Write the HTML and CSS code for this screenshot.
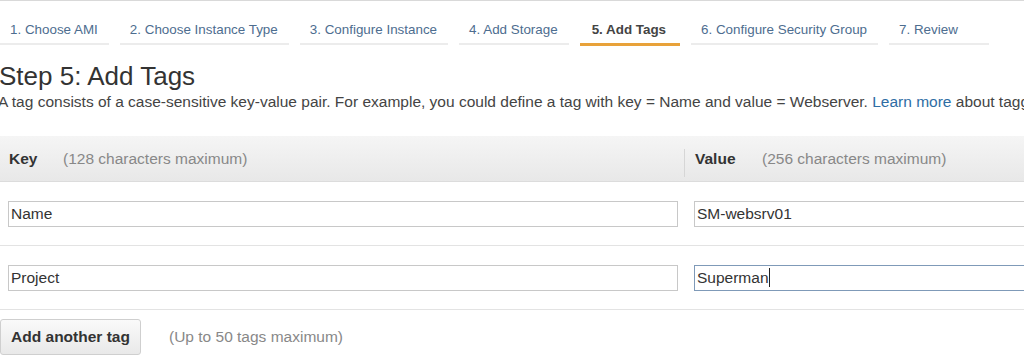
FILE: index.html
```html
<!DOCTYPE html>
<html>
<head>
<meta charset="utf-8">
<link rel="stylesheet" href="styles.css">
</head>
<body>
<nav class="tabs">
  <div class="tab">1. Choose AMI</div>
  <div class="tab">2. Choose Instance Type</div>
  <div class="tab">3. Configure Instance</div>
  <div class="tab">4. Add Storage</div>
  <div class="tab active">5. Add Tags</div>
  <div class="tab">6. Configure Security Group</div>
  <div class="tab last">7. Review</div>
</nav>
<main class="page">
  <h1 class="title">Step 5: Add Tags</h1>
  <p class="desc">A tag consists of a case-sensitive key-value pair. For example, you could define a tag with key = Name and value = Webserver. <a class="link">Learn more</a> about tagging</p>
  <div class="table">
    <div class="thead">
      <div class="th key-col"><b class="lbl-key">Key</b><span class="hint">(128 characters maximum)</span></div>
      <div class="th val-col"><b class="lbl-val">Value</b><span class="hint">(256 characters maximum)</span></div>
    </div>
    <div class="row">
      <div class="cell key-col"><div class="field">Name</div></div>
      <div class="cell val-col"><div class="field">SM-websrv01</div></div>
    </div>
    <div class="row">
      <div class="cell key-col"><div class="field">Project</div></div>
      <div class="cell val-col"><div class="field focus">Superman<span class="caret"></span></div></div>
    </div>
  </div>
  <div class="actions">
    <button class="btn">Add another tag</button>
    <span class="note">(Up to 50 tags maximum)</span>
  </div>
</main>
</body>
</html>
```
FILE: styles.css
```css
html, body {
  margin: 0;
  padding: 0;
  background: #fff;
  font-family: "Liberation Sans", Arial, sans-serif;
  color: #333;
  overflow: hidden;
}
.tabs {
  display: flex;
  gap: 11px;
  border-top: 1px solid #d9d9d9;
  height: 45px;
  white-space: nowrap;
}
.tab {
  padding: 16px 11px 0 10px;
  font-size: 13.4px;
  color: #4d6d8f;
  line-height: 26px;
  height: 26px;
  border-bottom: 2px solid #ececec;
}
.tab.last {
  padding-right: 31px;
}
.tab.active {
  color: #444;
  font-weight: bold;
  padding: 16px 14px 0 12px;
  border-bottom: 3px solid #e8a23a;
  height: 26px;
  margin-bottom: -1px;
}
.page {
  margin-left: -2px;
  white-space: nowrap;
}
.title {
  margin: 15px 0 0 1px;
  font-size: 26px;
  font-weight: normal;
  color: #333;
  line-height: 30px;
}
.desc {
  margin: 2px 0 0 0;
  font-size: 15.5px;
  color: #444;
  line-height: 18px;
}
.link {
  color: #2e6da4;
}
.table {
  margin-top: 25px;
  width: 1040px;
}
.thead {
  display: flex;
  height: 45px;
  background: linear-gradient(#f5f5f5, #e8e8e8);
  border-bottom: 1px solid #dcdcdc;
}
.th {
  display: flex;
  align-items: center;
  font-size: 15.5px;
  color: #333;
}
.lbl-key {
  width: 54px;
}
.lbl-val {
  width: 67px;
}
.hint {
  color: #888;
}
.key-col {
  width: 675px;
  padding-left: 11px;
}
.val-col {
  flex: 1;
  padding-left: 11px;
}
.th.val-col {
  position: relative;
}
.th.val-col::before {
  content: "";
  position: absolute;
  left: 0;
  top: 13px;
  bottom: 4px;
  border-left: 1px solid #d6d6d6;
}
.row {
  display: flex;
  height: 63px;
  align-items: center;
  border-bottom: 1px solid #e3e3e3;
}
.cell.key-col {
  padding-left: 10px;
  width: 678px;
}
.cell.val-col {
  padding-left: 8px;
}
.cell.key-col .field {
  width: 666px;
}
.field {
  height: 24px;
  border: 1px solid #c8c8c8;
  font-size: 15.5px;
  line-height: 24px;
  padding-left: 2px;
  color: #333;
}
.field.focus {
  border-color: #7f9ab8;
}
.caret {
  display: inline-block;
  width: 1px;
  height: 19px;
  background: #222;
  vertical-align: -4px;
}
.actions {
  display: flex;
  align-items: center;
  gap: 28px;
  margin-top: 9px;
  padding-left: 2px;
}
.btn {
  height: 36px;
  width: 141px;
  padding: 0;
  font-family: inherit;
  font-size: 15.5px;
  font-weight: bold;
  color: #333;
  background: linear-gradient(#fafafa, #e9e9e9);
  border: 1px solid #cfcfcf;
  border-radius: 3px;
}
.note {
  font-size: 15.5px;
  color: #888;
}
```
